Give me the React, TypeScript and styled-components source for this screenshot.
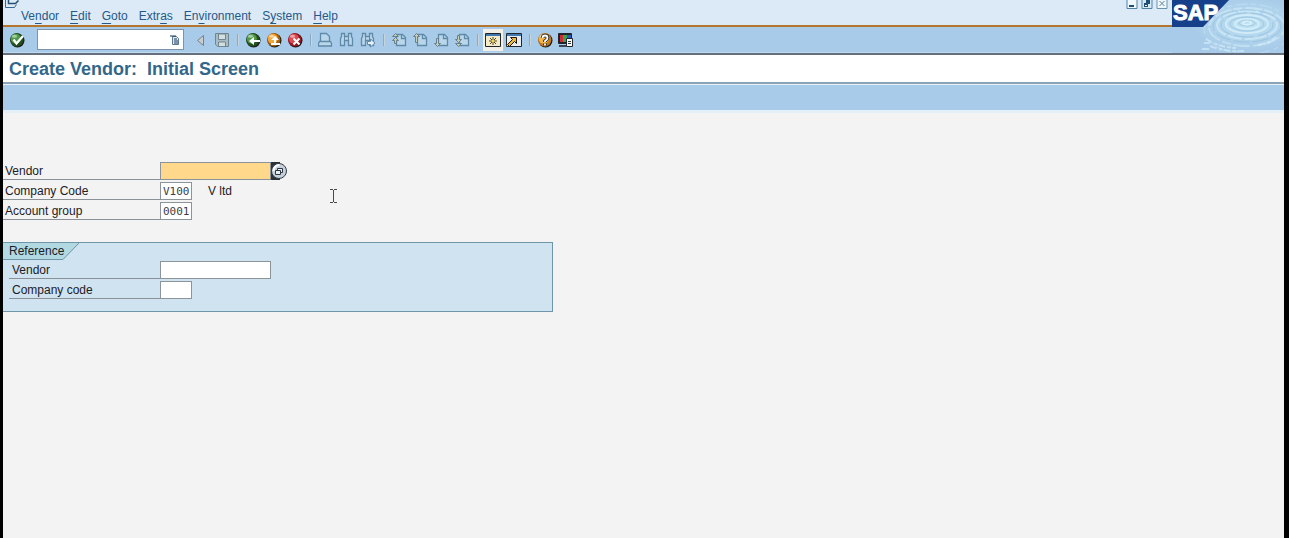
import React from "react";
import styled, { createGlobalStyle } from "styled-components";

const GlobalStyle = createGlobalStyle`
  *, *::before, *::after { box-sizing: border-box; }
  html, body, #root { height: 100%; }
  body {
    margin: 0;
    background: #000;
    font: 12px/16px "Liberation Sans", Arial, sans-serif;
    color: #1c2026;
  }
  button, input { font: inherit; color: inherit; margin: 0; padding: 0; border: 0; border-radius: 0; }
  button { background: none; }
`;

const Window = styled.div`
  position: relative;
  min-height: 100%;
  margin: 0 5px 0 3px;
  background: #f3f3f3;
  overflow: hidden;
`;

const Header = styled.header`
  display: grid;
  grid-template-columns: 1fr 112px;
  background: #a8cbe9;
  border-bottom: 2px solid #66707c;
`;

const MenuArea = styled.div`
  display: flex;
  justify-content: space-between;
  height: 27px;
  background: #dce9f6;
  border-bottom: 2px solid #b3762f;
`;

const MenuColumn = styled.div`
  display: flex;
  flex-direction: column;
`;

const SystemButton = styled.button`
  display: block;
  width: 18px;
  height: 8px;
  svg { display: block; }
`;

const MenuBar = styled.nav`
  display: flex;
  gap: 11px;
  padding-left: 18px;
`;

const MenuItem = styled.button`
  color: #24598a;
  line-height: 17px;
  u { text-underline-offset: 3px; text-decoration-thickness: 1px; }
`;

const WindowControls = styled.div`
  display: flex;
  gap: 3px;
  padding-right: 4px;
  button { height: 10px; width: 12px; }
  svg { display: block; }
`;

const Brand = styled.div`
  grid-column: 2;
  grid-row: 1 / 3;
  height: 53px;
  svg { display: block; }
`;

const Toolbar = styled.div`
  display: flex;
  align-items: center;
  gap: 5px;
  height: 26px;
  padding-left: 6px;
  border-bottom: 1px solid #bfdaf0;
`;

const ToolButton = styled.button<{ $raised?: boolean }>`
  width: 16px;
  height: 18px;
  background: ${(p) => (p.$raised ? "#f2efe6" : "none")};
  box-shadow: ${(p) => (p.$raised ? "0 0 0 2px #f2efe6" : "none")};
  svg { display: block; margin: auto; }
`;

const Divider = styled.span`
  width: 2px;
  height: 12px;
  margin: 0 1px 0 2px;
  background: #c9d3da;
  border-left: 1px solid #8fa9bd;
`;

const CommandBox = styled.div`
  display: flex;
  align-items: center;
  width: 147px;
  height: 21px;
  margin: 0 4px 0 7px;
  padding-right: 3px;
  background: #fff;
  border: 1px solid #7d93a8;
  input { flex: 1; min-width: 0; height: 19px; padding: 0 3px; background: none; outline: none; }
`;

const TitleBar = styled.div`
  height: 29px;
  padding: 0 6px;
  background: #fff;
  border-bottom: 2px solid #8ba3b6;
  h1 {
    margin: 0;
    font-size: 18px;
    line-height: 28px;
    font-weight: bold;
    color: #33678a;
    white-space: pre;
  }
`;

const AppBar = styled.div`
  height: 29px;
  background: #a8cbe9;
  border-top: 1px solid #e6f1f9;
  border-bottom: 3px solid #e4f0f7;
`;

const Main = styled.main`
  padding-top: 49px;
`;

const Rows = styled.div<{ $inset?: boolean }>`
  display: flex;
  flex-direction: column;
  gap: 2px;
  padding-left: ${(p) => (p.$inset ? "6px" : "0")};
`;

const Row = styled.div`
  display: flex;
  height: 18px;
`;

const Label = styled.label<{ $inset?: boolean }>`
  width: ${(p) => (p.$inset ? "151px" : "157px")};
  padding-left: ${(p) => (p.$inset ? "3px" : "2px")};
  line-height: 18px;
  border-bottom: 1px solid #8b9196;
`;

const Field = styled.input<{ $wide?: boolean; $focus?: boolean }>`
  width: ${(p) => (p.$wide ? "111px" : "32px")};
  height: 18px;
  padding: 0 2px;
  background: ${(p) => (p.$focus ? "#ffd88c" : "#fff")};
  border: 1px solid #8d9499;
  font: 11px/16px "DejaVu Sans Mono", monospace;
  color: #3c4044;
  outline: none;
`;

const SearchHelp = styled.button`
  width: 17px;
  height: 18px;
  svg { display: block; }
`;

const FieldText = styled.span`
  padding-left: 16px;
  line-height: 18px;
`;

const Group = styled.section`
  width: 550px;
  max-width: 100%;
  margin-top: 22px;
  padding-bottom: 12px;
  background: #d0e3f1;
  border: 1px solid #6f95a8;
  border-left: 0;
`;

const GroupTitle = styled.h2`
  position: relative;
  width: 78px;
  height: 18px;
  margin: 0;
  padding-left: 6px;
  font-size: 12px;
  font-weight: normal;
  line-height: 16px;
  svg { position: absolute; left: 0; top: 0; }
  span { position: relative; }
`;

const TextCursor = styled.svg`
  position: absolute;
  left: 326px;
  top: 188px;
`;

const Icon = ({ children, w = 16, h = 16 }: { children: React.ReactNode; w?: number; h?: number }) => (
  <svg width={w} height={h} viewBox={`0 0 ${w} ${h}`} fill="none" aria-hidden="true">
    {children}
  </svg>
);

const Ball = ({ color, dark, children }: { color: string; dark: string; children: React.ReactNode }) => (
  <Icon>
    <circle cx="8.5" cy="8.5" r="7" fill="#1d1d1b" />
    <circle cx="7.7" cy="7.7" r="6.7" fill={dark} />
    <circle cx="6.8" cy="6.8" r="5" fill={color} />
    <ellipse cx="5.5" cy="4.3" rx="2.6" ry="1.5" fill="#fff" opacity=".5" />
    {children}
  </Icon>
);

const Binoculars = ({ next }: { next?: boolean }) => (
  <Icon>
    <path
      d="M1.5 13.500V6.500l1-2v-3h3v3h4v-3h3v3l1 2v7h-4v-5h-4v5z"
      stroke="#5f8aa8"
      strokeWidth="1.300"
      fill="#b9d6ea"
    />
    <path d="M5.500 4.500v4M9.500 4.500v4" stroke="#5f8aa8" />
    {next && <path d="M7.500 9.500h3v-2.500l4.500 4-4.500 4v-2.500h-3z" fill="#e6f0f6" stroke="#5f8aa8" />}
  </Icon>
);

const PageIcon = ({ arrow }: { arrow: string }) => (
  <Icon>
    <path d="M5.500 2.500h6l3 3v8h-9z" fill="#b9d6ea" stroke="#5f8aa8" strokeWidth="1.300" />
    <path d="M10.500 2.500v4h4" stroke="#5f8aa8" strokeWidth="1.300" />
    <path d={arrow} fill="#c9cfb6" stroke="#67808a" />
  </Icon>
);

const SapBrand = () => (
  <svg width="112" height="53" viewBox="0 0 112 53" aria-label="SAP" role="img">
    <defs>
      <radialGradient id="water" cx=".68" cy=".45" r=".5">
        <stop offset="0" stopColor="#bfe2f3" />
        <stop offset="1" stopColor="#a8cbe9" />
      </radialGradient>
    </defs>
    <rect width="112" height="53" fill="url(#water)" />
    <g fill="none" stroke="#d8f0fa">
      <ellipse cx="75" cy="23" rx="4" ry="2" strokeWidth="2" opacity=".9" />
      <ellipse cx="75" cy="24" rx="12" ry="5" strokeWidth="2" opacity=".8" />
      <ellipse cx="75" cy="24" rx="21" ry="9" strokeWidth="2" opacity=".75" />
      <ellipse cx="75" cy="25" rx="30" ry="14" strokeWidth="2" opacity=".6" strokeDasharray="14 2 22 3" />
      <ellipse cx="75" cy="27" rx="38" ry="19" strokeWidth="2" opacity=".5" strokeDasharray="9 3 17 2" />
      <ellipse cx="76" cy="29" rx="44" ry="25" strokeWidth="1" opacity=".4" strokeDasharray="5 4 12 3" />
      <path
        d="M34 39q12 8 30 9M38 46q16 6 34 5M32 43h6M30 49h9M86 45q12-2 18-8"
        strokeWidth="2"
        opacity=".6"
        strokeDasharray="7 2 4 1"
      />
    </g>
    <g fill="none" stroke="#86b7d9" opacity=".5">
      <ellipse cx="75" cy="23" rx="8" ry="3" />
      <ellipse cx="75" cy="24" rx="17" ry="7" />
      <ellipse cx="75" cy="25" rx="26" ry="12" strokeDasharray="20 4" />
      <ellipse cx="75" cy="26" rx="34" ry="16" strokeDasharray="16 3" />
    </g>
    <path d="M0 0h57L31 27H0z" fill="#17408b" />
    <text
      x="1"
      y="20"
      fontFamily="Liberation Sans, Arial, sans-serif"
      fontWeight="bold"
      fontSize="22"
      fill="#fff"
      stroke="#fff"
      strokeWidth="1"
    >
      SAP
    </text>
  </svg>
);

const menus: [string, string, string][] = [
  ["Ve", "n", "dor"],
  ["", "E", "dit"],
  ["", "G", "oto"],
  ["Extr", "a", "s"],
  ["En", "v", "ironment"],
  ["S", "y", "stem"],
  ["", "H", "elp"],
];

export default function App() {
  return (
    <Window>
      <GlobalStyle />
      <Header>
        <MenuArea>
          <MenuColumn>
            <SystemButton aria-label="Window menu">
              <Icon w={18} h={8}>
                <path d="M2.500 0v7.500h9l2-3" stroke="#376891" />
                <path d="M5.500 0v3.500h7l3-3" stroke="#245078" strokeWidth="1.500" />
              </Icon>
            </SystemButton>
            <MenuBar>
              {menus.map(([a, b, c]) => (
                <MenuItem key={a + b + c}>
                  {a}
                  <u>{b}</u>
                  {c}
                </MenuItem>
              ))}
            </MenuBar>
          </MenuColumn>
          <WindowControls>
            <button aria-label="Minimize">
              <Icon w={12} h={10}>
                <path d="M1 0v8.500h10V0" fill="#eef7fc" stroke="#4f83a5" />
                <path d="M3 6h5" stroke="#1f4f78" strokeWidth="2" />
              </Icon>
            </button>
            <button aria-label="Restore">
              <Icon w={12} h={10}>
                <path d="M1 0v8.500h10V0" fill="#d5e9f4" stroke="#4f83a5" />
                <path d="M5 0h4v4H5zM3 3h4v4H3z" fill="#1f4f78" />
                <path d="M4 5h2v1H4z" fill="#fff" />
              </Icon>
            </button>
            <button aria-label="Close">
              <Icon w={12} h={10}>
                <path d="M1 0v8.500h10V0" fill="#eef7fc" stroke="#6a93ae" />
                <path d="M3.500 1l5 5M8.500 1l-5 5" stroke="#5b7f99" />
              </Icon>
            </button>
          </WindowControls>
        </MenuArea>
        <Brand>
          <SapBrand />
        </Brand>
        <Toolbar>
          <ToolButton aria-label="Enter">
            <Ball color="#4f9a4a" dark="#24501f">
              <path d="M4.500 7.500l3 4L14 4" stroke="#fff" strokeWidth="2.200" />
            </Ball>
          </ToolButton>
          <CommandBox>
            <input aria-label="Command" />
            <Icon w={10} h={12}>
              <path d="M2.500 2.500h4l2 2v6h-6z" fill="#dfe8ee" stroke="#597b93" />
              <path d="M0 2h6M4 5h3M4 7h4M4 9h4" stroke="#1f3d58" />
            </Icon>
          </CommandBox>
          <ToolButton aria-label="Previous">
            <Icon>
              <path d="M10.500 3.500v10l-6-5z" fill="#c9cdd0" stroke="#7d7f80" />
            </Icon>
          </ToolButton>
          <ToolButton aria-label="Save">
            <Icon>
              <path d="M1.500 1.500h13v13h-11l-2-2z" fill="#a9bcc4" stroke="#71868c" />
              <path d="M4.500 2h7v5.500h-7zM4.500 14v-4h7v4" fill="#d3dfe2" stroke="#71868c" />
            </Icon>
          </ToolButton>
          <Divider />
          <ToolButton aria-label="Back">
            <Ball color="#4f9a4a" dark="#24501f">
              <path d="M4 9l5-4v3h6v2H9v3z" fill="#fff" />
            </Ball>
          </ToolButton>
          <ToolButton aria-label="Exit">
            <Ball color="#f2a63a" dark="#a85f10">
              <path d="M9 4l4 4h-3v3h4v2H5v-2h3V8H5z" fill="#fff" />
            </Ball>
          </ToolButton>
          <ToolButton aria-label="Cancel">
            <Ball color="#dd4a4f" dark="#9c1420">
              <path d="M6.500 6.500l6 6M12.500 6.500l-6 6" stroke="#fff" strokeWidth="2" />
            </Ball>
          </ToolButton>
          <Divider />
          <ToolButton aria-label="Print">
            <Icon>
              <path d="M2.500 9.500v-8h6l3 3v5" fill="#b9d6ea" stroke="#5f8aa8" strokeWidth="1.300" />
              <path d="M1.500 9.500h11l1 2v2.500h-13v-2.500z" fill="#b9d6ea" stroke="#5f8aa8" strokeWidth="1.300" />
            </Icon>
          </ToolButton>
          <ToolButton aria-label="Find">
            <Binoculars />
          </ToolButton>
          <ToolButton aria-label="Find next">
            <Binoculars next />
          </ToolButton>
          <Divider />
          <ToolButton aria-label="First page">
            <PageIcon arrow="M1.500 4.500l3-3 3 3zM1.500 8.500l3-3 3 3h-2v3h-2v-3z" />
          </ToolButton>
          <ToolButton aria-label="Previous page">
            <PageIcon arrow="M1.500 4.500l3-3 3 3h-2v6h-2v-6z" />
          </ToolButton>
          <ToolButton aria-label="Next page">
            <PageIcon arrow="M1.500 11.500l3 3 3-3h-2v-5h-2v5z" />
          </ToolButton>
          <ToolButton aria-label="Last page">
            <PageIcon arrow="M1.500 7.500l3 3 3-3h-2v-4h-2v4zM1.500 11.500l3 3 3-3z" />
          </ToolButton>
          <Divider />
          <ToolButton aria-label="New session" $raised>
            <Icon>
              <path d="M.500 1.500h15v13H.500z" fill="#f4ecc9" stroke="#20262c" />
              <path d="M1 2h14v2H1z" fill="#3f79b0" />
              <path d="M8 5v8M4 9h8M5 6l6 6M11 6l-6 6" stroke="#5a4714" />
              <path d="M7 8h2v2H7z" fill="#f7d64a" />
            </Icon>
          </ToolButton>
          <ToolButton aria-label="Create shortcut">
            <Icon>
              <path d="M.500 1.500h15v13H.500z" fill="#e9edf0" stroke="#20262c" />
              <path d="M1 2h14v2H1z" fill="#3f79b0" />
              <path d="M4.500 5.500h6v6l-2-2L3.500 14.500 1.500 12.500 6.500 7.500z" fill="#eeb73a" stroke="#1d1a12" />
            </Icon>
          </ToolButton>
          <Divider />
          <ToolButton aria-label="Help">
            <Ball color="#f4b64a" dark="#c47a1c">
              <path
                d="M5.500 6q0-2.500 2.500-2.500T10.500 6q0 1.500-2.500 3v1M8 11.500v2"
                stroke="#222"
                strokeWidth="3.500"
              />
              <path
                d="M5.500 6q0-2.500 2.500-2.500T10.500 6q0 1.500-2.500 3v1M8 11.500v2"
                stroke="#fff"
                strokeWidth="1.800"
              />
            </Ball>
          </ToolButton>
          <ToolButton aria-label="Customize layout">
            <Icon>
              <path d="M.500 1.500h13v10H.500z" fill="#222" stroke="#20262c" />
              <path d="M2 3h3v7H2z" fill="#d12a34" />
              <path d="M5 3h4v7H5z" fill="#38a349" />
              <path d="M9 3h4v7H9z" fill="#3155b8" />
              <path d="M1 14h7" stroke="#3c4854" strokeWidth="2" />
              <path d="M8.500 6.500h6v8h-6z" fill="#fff" stroke="#20262c" />
              <path d="M10 9.500h3M10 11.500h3" stroke="#333" />
            </Icon>
          </ToolButton>
        </Toolbar>
      </Header>
      <TitleBar>
        <h1>{"Create Vendor:  Initial Screen"}</h1>
      </TitleBar>
      <AppBar />
      <Main>
        <Rows>
          <Row>
            <Label htmlFor="vendor">Vendor</Label>
            <Field id="vendor" $wide $focus />
            <SearchHelp aria-label="Search help">
              <Icon w={17} h={18}>
                <path d="M0 0h9v18H0z" fill="#2c3238" />
                <circle cx="8" cy="9" r="7.500" fill="#c5d0da" stroke="#2f3a44" />
                <path d="M2.500 9a6 6 0 0 1 6-6" stroke="#fff" strokeWidth="2" />
                <path d="M6.500 6.500h5v4h-5z" fill="#e8eef2" stroke="#2b3640" />
                <path d="M4.500 8.500h5v4h-5z" fill="#e8eef2" stroke="#2b3640" />
              </Icon>
            </SearchHelp>
          </Row>
          <Row>
            <Label htmlFor="company">Company Code</Label>
            <Field id="company" defaultValue="V100" />
            <FieldText>V ltd</FieldText>
          </Row>
          <Row>
            <Label htmlFor="group">Account group</Label>
            <Field id="group" defaultValue="0001" />
          </Row>
        </Rows>
        <Group>
          <GroupTitle>
            <svg width="78" height="18" viewBox="0 0 78 18" aria-hidden="true">
              <path d="M0 0h76L60 16.500H0z" fill="#b2d8e2" />
              <path d="M76 0L60 16.500H0" fill="none" stroke="#6f95a8" />
            </svg>
            <span>Reference</span>
          </GroupTitle>
          <Rows $inset>
            <Row>
              <Label htmlFor="ref-vendor" $inset>
                Vendor
              </Label>
              <Field id="ref-vendor" $wide />
            </Row>
            <Row>
              <Label htmlFor="ref-company" $inset>
                Company code
              </Label>
              <Field id="ref-company" />
            </Row>
          </Rows>
        </Group>
      </Main>
      <TextCursor width="9" height="16" viewBox="0 0 9 16" fill="none" aria-hidden="true">
        <path d="M1 1.500h3M5 1.500h3M4.500 2v12M1 14.500h3M5 14.500h3" stroke="#45494d" />
      </TextCursor>
    </Window>
  );
}
